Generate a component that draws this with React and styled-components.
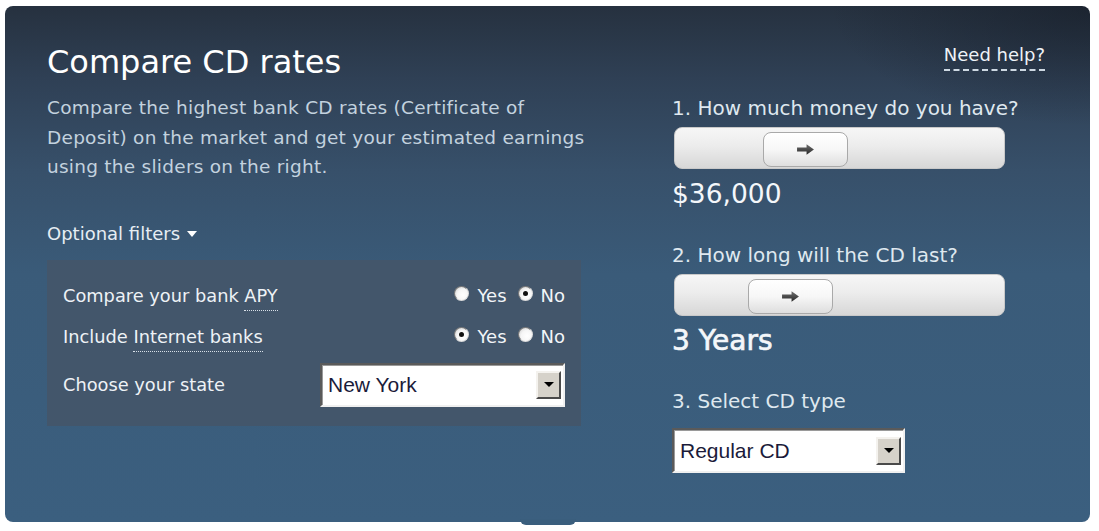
import React from 'react'
import styled, { createGlobalStyle } from 'styled-components'

const GlobalStyle = createGlobalStyle`
  html, body {
    margin: 0;
    padding: 0;
    background: #ffffff;
  }
  body {
    font-family: "DejaVu Sans", "Liberation Sans", sans-serif;
  }
`

const Page = styled.div`
  width: 1099px;
  height: 531px;
  padding: 6px 9px 9px 5px;
  box-sizing: border-box;
`

const Panel = styled.section`
  position: relative;
  height: 516px;
  box-sizing: border-box;
  border-radius: 8px;
  padding: 36px 45px 0 42px;
  display: grid;
  grid-template-columns: 534px 1fr;
  column-gap: 91px;
  background:
    radial-gradient(ellipse 260px 120px at 100% 0%, rgba(20, 26, 36, 0.55), rgba(20, 26, 36, 0) 100%),
    linear-gradient(180deg, #26313f 0%, #2f4055 14%, #37506a 32%, #3a5b79 52%, #3b5f7f 100%);
`

const Notch = styled.div`
  position: absolute;
  left: 515px;
  bottom: -3px;
  width: 56px;
  height: 6px;
  border-radius: 0 0 6px 6px;
  background: #3a5e7d;
`

const LeftColumn = styled.div`
  display: flex;
  flex-direction: column;
`

const Title = styled.h1`
  margin: 0;
  color: #ffffff;
  font-size: 32px;
  font-weight: normal;
  line-height: 40px;
`

const Intro = styled.p`
  margin: 11px 0 0 0;
  width: 580px;
  white-space: nowrap;
  color: #c3d2df;
  font-size: 18.5px;
  letter-spacing: 0.25px;
  line-height: 29.5px;
`

const FilterToggle = styled.div`
  margin-top: 41px;
  color: #e6edf3;
  font-size: 18px;
  line-height: 22px;
  display: flex;
  align-items: center;
  gap: 7px;
`

const Caret = styled.span`
  width: 0;
  height: 0;
  border-left: 5px solid transparent;
  border-right: 5px solid transparent;
  border-top: 6px solid #ffffff;
  margin-top: 1px;
`

const FilterBox = styled.div`
  margin-top: 15px;
  height: 166px;
  box-sizing: border-box;
  background: #43566b;
  padding: 20px 16px 0 16px;
  display: flex;
  flex-direction: column;
`

const FilterRow = styled.div`
  display: flex;
  align-items: center;
  justify-content: space-between;
  height: ${p => p.$h || 41}px;
`

const RowLabel = styled.span`
  color: #eef2f6;
  font-size: 17.8px;
  line-height: 22px;
`

const Term = styled.span`
  border-bottom: 1px dotted #d8e0e8;
  padding-bottom: 4px;
`

const RadioGroup = styled.div`
  display: flex;
  align-items: center;
`

const RadioOption = styled.label`
  display: flex;
  align-items: center;
  gap: 8px;
  color: #f2f5f8;
  font-size: 18px;
  margin-left: ${p => p.$first ? 0 : 11}px;
`

const Radio = styled.span`
  position: relative;
  width: 15px;
  height: 15px;
  border-radius: 50%;
  box-sizing: border-box;
  border: 1px solid #7c7c7c;
  border-bottom-color: #dcdcdc;
  border-right-color: #dcdcdc;
  background: radial-gradient(circle at 62% 62%, #ffffff 0%, #f6f6f6 50%, #c8c8c8 100%);
  margin-top: -5px;

  &::after {
    content: '';
    display: ${p => p.$checked ? 'block' : 'none'};
    position: absolute;
    left: 4px;
    top: 4px;
    width: 5px;
    height: 5px;
    border-radius: 50%;
    background: #111111;
  }
`

const Select = styled.div`
  width: ${p => p.$w}px;
  height: ${p => p.$h}px;
  margin-top: ${p => p.$mt || 0}px;
  box-sizing: border-box;
  background: #ffffff;
  border: 2px solid;
  border-color: #5a5a5a #f0f0f0 #f0f0f0 #5a5a5a;
  box-shadow: inset 1px 1px 0 #9a9a9a;
  display: flex;
  align-items: center;
  justify-content: space-between;
  padding: 0 2px 0 6px;
  font-family: "Liberation Sans", Arial, sans-serif;
  font-size: 21px;
  color: #1b1b3a;
`

const DropButton = styled.span`
  width: 25px;
  height: 28px;
  box-sizing: border-box;
  background: #d6d2ca;
  border: 2px solid;
  border-color: #f4f2ee #4a4a4a #4a4a4a #f4f2ee;
  display: flex;
  align-items: center;
  justify-content: center;

  &::after {
    content: '';
    border-left: 5px solid transparent;
    border-right: 5px solid transparent;
    border-top: 5px solid #000000;
  }
`

const RightColumn = styled.div`
  display: flex;
  flex-direction: column;
`

const HelpLink = styled.a`
  align-self: flex-end;
  color: #eef3f7;
  font-size: 18px;
  line-height: 22px;
  text-decoration: none;
  border-bottom: 2px dashed #cdd8e2;
  padding-bottom: 3px;
  margin-top: 2px;
`

const Question = styled.div`
  color: #dfe8ef;
  font-size: ${p => p.$size || 20}px;
  line-height: 24px;
  margin-top: ${p => p.$mt}px;
  white-space: nowrap;
`

const Track = styled.div`
  margin-top: 7px;
  margin-left: 2px;
  width: 331px;
  height: 42px;
  box-sizing: border-box;
  border-radius: 8px;
  border: 1px solid #c9c9c9;
  background: linear-gradient(180deg, #f6f6f6 0%, #ececec 45%, #d7d7d7 100%);
  padding: 4px 0 0 ${p => p.$pos}px;
`

const Handle = styled.div`
  width: 85px;
  height: 35px;
  box-sizing: border-box;
  border-radius: 8px;
  border: 1px solid #a9a9a9;
  background: linear-gradient(180deg, #ffffff 0%, #f7f7f7 50%, #dedede 100%);
  display: flex;
  align-items: center;
  justify-content: center;
`

const Value = styled.div`
  color: #f4f7fa;
  font-size: ${p => p.$size}px;
  line-height: 34px;
  margin-top: 8px;
  -webkit-text-stroke: ${p => p.$heavy ? '0.7px #f4f7fa' : '0'};
`

const Arrow = () => (
  <svg width="19" height="13" viewBox="0 0 18 12">
    <defs>
      <linearGradient id="arrowFill" x1="0" y1="0" x2="0" y2="1">
        <stop offset="0" stopColor="#707070" />
        <stop offset="1" stopColor="#262626" />
      </linearGradient>
    </defs>
    <path d="M1 4 H10 V1 L17 6 L10 11 V8 H1 Z" fill="url(#arrowFill)" />
  </svg>
)

const Slider = ({ pos }) => (
  <Track $pos={pos}>
    <Handle>
      <Arrow />
    </Handle>
  </Track>
)

const RadioPair = ({ yes }) => (
  <RadioGroup>
    <RadioOption $first>
      <Radio $checked={yes} />
      Yes
    </RadioOption>
    <RadioOption>
      <Radio $checked={!yes} />
      No
    </RadioOption>
  </RadioGroup>
)

export default function App() {
  return (
    <>
      <GlobalStyle />
      <Page>
        <Panel>
          <LeftColumn>
            <Title>Compare CD rates</Title>
            <Intro>
              Compare the highest bank CD rates (Certificate of<br />
              Deposit) on the market and get your estimated earnings<br />
              using the sliders on the right.
            </Intro>
            <FilterToggle>
              Optional filters <Caret />
            </FilterToggle>
            <FilterBox>
              <FilterRow $h={32}>
                <RowLabel>Compare your bank <Term>APY</Term></RowLabel>
                <RadioPair yes={false} />
              </FilterRow>
              <FilterRow $h={50}>
                <RowLabel>Include <Term>Internet banks</Term></RowLabel>
                <RadioPair yes />
              </FilterRow>
              <FilterRow $h={46}>
                <RowLabel>Choose your state</RowLabel>
                <Select $w={245} $h={44}>
                  New York
                  <DropButton />
                </Select>
              </FilterRow>
            </FilterBox>
          </LeftColumn>
          <RightColumn>
            <HelpLink href="#">Need help?</HelpLink>
            <Question $mt={25}>1. How much money do you have?</Question>
            <Slider pos={88} />
            <Value $size={26.5}>$36,000</Value>
            <Question $mt={32}>2. How long will the CD last?</Question>
            <Slider pos={73} />
            <Value $size={28} $heavy>3 Years</Value>
            <Question $mt={31}>3. Select CD type</Question>
            <Select $w={233} $h={45} $mt={15}>
              Regular CD
              <DropButton />
            </Select>
          </RightColumn>
          <Notch />
        </Panel>
      </Page>
    </>
  )
}
